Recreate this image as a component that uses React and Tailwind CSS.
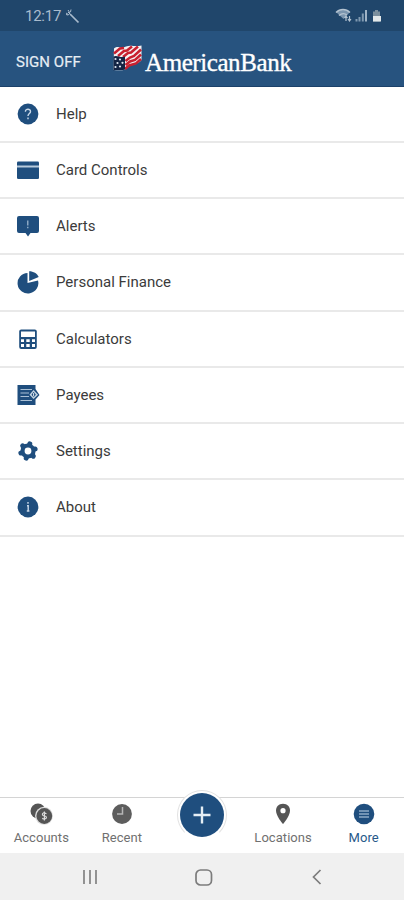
const NAVY = "#1f4e7e";

function FlagLogo() {
  return (
    <svg width="31" height="28" viewBox="0 0 31 28" className="shrink-0">
      <path d="M2 4.500C6 1 9 5 14 2.500C19 .5 22 3 29.500 1.500V16C26 21 22 18 17 22L13 25.500C9 27 5 26 1.500 26Z" fill="#f4f1f3" />
      <g stroke="#c8202f" strokeWidth="2.500" fill="none">
        <path d="M2 9.500L8 4.500L12 4" />
        <path d="M6 12L12 7L15 6.500L20 2.500" />
        <path d="M11 13L16 9L19 8.500L26 2.500" />
        <path d="M13.500 17L18 13.500L22 12L29 5.500" />
        <path d="M13.500 21L18 17.500L23 16L29 10.500" />
        <path d="M13 25L17 21.500L24 19.500L29 15" />
      </g>
      <path d="M1.500 12.500C5 10.500 9 14.500 13 12.500V25.500C9 27 5 25 1.500 26.500Z" fill="#142444" />
      <g fill="#dfe6f0">
        <circle cx="3.500" cy="15" r="1.100" /><circle cx="8" cy="15.500" r="1.100" />
        <circle cx="5.500" cy="19" r="1.100" /><circle cx="10.500" cy="18.800" r="1.100" />
        <circle cx="3.500" cy="23" r="1.100" /><circle cx="8" cy="22.500" r="1.100" />
      </g>
    </svg>
  );
}

const icons = {
  Help: (
    <>
      <circle cx="12" cy="12" r="10.400" fill={NAVY} />
      <path d="M9.400 9.700C9.400 6.300 14.700 6.500 14.500 9.700C14.400 11.500 12 11.700 12 14M12 15.600V17.200" stroke="#c9d8e8" strokeWidth="1.400" fill="none" />
    </>
  ),
  "Card Controls": (
    <>
      <rect x="1" y="3.500" width="22" height="17.500" rx="1.300" fill={NAVY} />
      <path d="M1 8.500H23" stroke="#b9cbdc" strokeWidth="2" />
    </>
  ),
  Alerts: (
    <>
      <path d="M3 2H21Q23 2 23 4V17Q23 19 21 19H14.500L12 22.500L9.500 19H3Q1 19 1 17V4Q1 2 3 2Z" fill={NAVY} />
      <path d="M11.800 6.500V11.500M11.800 12.800V14.200" stroke="#a5bdd4" strokeWidth="1.200" />
    </>
  ),
  "Personal Finance": (
    <>
      <path d="M11.500 3V13L22 10.500A10.400 10.200 0 1 1 11.500 3Z" fill={NAVY} />
      <path d="M13.200 1.300C17.500 1.300 21 3.500 22.700 7L13.200 11Z" fill={NAVY} />
    </>
  ),
  Calculators: (
    <>
      <rect x="3.200" y="2.500" width="17.600" height="19.500" rx="2" fill={NAVY} />
      <path d="M5 4.500H19V10H5Z" fill="#fff" />
      <path d="M5 12.300H8V15H5ZM10.300 12.300H13.700V15H10.300ZM16 12.300H19V15H16ZM5 17H8V20H5ZM10.300 17H13.700V20H10.300ZM16 17H19V20H16Z" fill="#fff" />
    </>
  ),
  Payees: (
    <>
      <path d="M1.500 2H19.500V6L23.500 12L19.500 16.500V22H1.500Z" fill={NAVY} />
      <path d="M4.500 6.500H16M4.500 10H13M4.500 13.500H13M4.500 17.500H16" stroke="#aac0d5" strokeWidth="1.200" />
      <path d="M17.500 7L22 11.800L17.500 16L13.500 11.800Z" fill="#c6d5e3" />
      <path d="M17.600 8.800L19.800 11.800L17.600 14.300L15.500 11.800Z" fill={NAVY} />
      <path d="M17.600 10V13.300" stroke="#dce6ef" />
    </>
  ),
  Settings: (
    <>
      <g stroke={NAVY} strokeWidth="5" strokeLinecap="round" transform="rotate(14 12 12)">
        <path d="M12 4.600V19.400M5.600 8.300L18.400 15.700M5.600 15.700L18.400 8.300" />
      </g>
      <circle cx="12" cy="12" r="5.500" stroke={NAVY} strokeWidth="4.200" fill="#fff" />
    </>
  ),
  About: (
    <>
      <circle cx="12" cy="12" r="10.400" fill={NAVY} />
      <path d="M12 7V8.700M11 10.700H12.200V16M10.800 16H13.400" stroke="#c9d8e8" strokeWidth="1.400" fill="none" />
    </>
  ),
};

function StatusBar() {
  return (
    <div className="flex h-[31px] items-center justify-between bg-[#20466b] pl-[25px] pr-[19px] text-[#a9bbcd]">
      <div className="flex items-center gap-[4px] pt-px">
        <span className="text-[15px] leading-none tracking-[-0.25px]">12:17</span>
        <svg width="15" height="15" viewBox="0 0 15 15" fill="none" stroke="currentColor">
          <path d="M5 5L13.500 13.500" strokeWidth="1.700" />
          <path d="M1 4L4 6M3 1L5 4M6 .5L5.500 3M1 5.500L3 6M3 3L6 6" strokeWidth="1" />
        </svg>
      </div>
      <div className="flex items-center">
        <svg width="50" height="15" viewBox="0 0 50 15">
          <path d="M1.500 4.500C5 .7 11 .7 14.500 4.500L8.500 11Z" fill="#7b95ae" />
          <path d="M1 4.500C5 .5 11 .5 15 4.500M4 7.500Q8 4 12 7" fill="none" stroke="#b4c3d1" strokeWidth="1.400" />
          <path d="M11 13V8M9.500 10L11 8L12.500 10M14.500 8V13M13 11L14.500 13L16 11" fill="none" stroke="#b4c3d1" strokeWidth="1.200" />
          <path d="M21.500 11V13.500M24.500 9V13.500M27.800 5.500V13.500" stroke="#7f99b1" strokeWidth="2" />
          <path d="M31 2V13.500" stroke="#9fb3c6" strokeWidth="2" />
          <path d="M40 2H43V3.500H45V13.500H38V3.500H40Z" fill="#7b8f9d" />
          <path d="M38 8H46V13.500H38Z" fill="#e2e8e9" />
        </svg>
      </div>
    </div>
  );
}

const tabs = [
  {
    label: "Accounts",
    icon: (
      <>
        <circle cx="9" cy="9" r="7.500" fill="#555" />
        <circle cx="15" cy="13.800" r="9" fill="#ddd" />
        <circle cx="15.300" cy="14" r="7.900" fill="#555" />
        <path d="M17.500 11.700Q13.300 9.900 13.400 12.500Q13.600 14 15.500 14Q18 14.400 17.200 16.200Q16 17.600 13.200 16.400M15.400 9.500V18.500" stroke="#ddd" strokeWidth="1.200" fill="none" />
      </>
    ),
  },
  {
    label: "Recent",
    icon: (
      <>
        <circle cx="12" cy="12" r="9.900" fill="#5d5d5d" />
        <path d="M12.500 5V12H7" stroke="#b7b7b7" strokeWidth="1.500" fill="none" />
      </>
    ),
  },
  null,
  {
    label: "Locations",
    icon: (
      <>
        <path d="M12 1.800C7.500 1.800 5 5 5 8.700C5 14 12 22 12 22S19 14 19 8.700C19 5 16.500 1.800 12 1.800Z" fill="#555" />
        <circle cx="12" cy="8.700" r="2.600" fill="#fff" />
      </>
    ),
  },
  {
    label: "More",
    icon: (
      <>
        <circle cx="12" cy="12" r="10.300" fill={NAVY} />
        <path d="M7 9H17M7 12H17M7 15H17" stroke="#8fabc6" strokeWidth="1.300" />
      </>
    ),
  },
];

function TabBar() {
  return (
    <nav className="grid h-[56px] grid-cols-5 border-t border-[#d4d4d4] bg-white pl-px">
      {tabs.map((tab) =>
        tab ? (
          <div key={tab.label} className={`flex flex-col items-center pt-[4px] ${tab.label === "More" ? "text-[#28598a]" : "text-[#707070]"}`}>
            <svg width="24" height="24" viewBox="0 0 24 24">{tab.icon}</svg>
            <span className="mt-[4px] whitespace-nowrap text-[13px] leading-4 tracking-[0.05px]">{tab.label}</span>
          </div>
        ) : (
          <div key="add" className="flex justify-center">
            <div className="-mt-[8px] flex h-[50px] w-[50px] shrink-0 items-center justify-center rounded-full border border-[#e2e2e2] border-b-transparent bg-white">
              <div className="flex h-[44px] w-[44px] items-center justify-center rounded-full bg-[#1f4e7e]">
                <svg width="20" height="20" viewBox="0 0 20 20">
                  <path d="M10 1.500V18.500M1.500 10H18.500" stroke="#e5eef5" strokeWidth="2.400" />
                </svg>
              </div>
            </div>
          </div>
        ),
      )}
    </nav>
  );
}

export default function App() {
  return (
    <div className="flex h-[900px] w-[404px] flex-col overflow-hidden bg-white font-['Roboto',sans-serif]">
      <StatusBar />
      <header className="flex h-[55.5px] items-center border-b border-[#1c416a] bg-[#27537f] pl-4 text-white">
        <span className="w-[96px] shrink-0 whitespace-nowrap pt-[8px] text-[15px] leading-none tracking-[0.05px] text-[#e6edf4] [-webkit-text-stroke:0.2px_#e6edf4]">SIGN OFF</span>
        <FlagLogo />
        <span className="ml-[2px] whitespace-nowrap pt-[9px] font-['Liberation_Serif',serif] text-[25px] leading-none tracking-[-0.42px] [-webkit-text-stroke:0.35px_white]">AmericanBank</span>
      </header>
      <main className="flex-1">
        {Object.entries(icons).map(([label, icon]) => (
          <div key={label} className="flex h-[56.25px] items-center border-b-2 border-[#e9e9e9] pl-4">
            <svg width="24" height="24" viewBox="0 0 24 24" className="mr-4 shrink-0">{icon}</svg>
            <span className="text-[15px] leading-5 text-[#3b3b3b]">{label}</span>
          </div>
        ))}
      </main>
      <TabBar />
      <div className="flex h-[47px] items-center bg-[#f0f0f0] pl-[82px] pt-px text-[#7c7c7c]">
        <svg width="16" height="16" viewBox="0 0 16 16" fill="none" stroke="currentColor" strokeWidth="1.600">
          <path d="M2 1V15M8 1V15M14 1V15" />
        </svg>
        <svg width="18" height="18" viewBox="0 0 18 18" className="ml-[97px]" fill="none" stroke="currentColor" strokeWidth="1.700">
          <rect x="1" y="2" width="15.500" height="15" rx="4.500" />
        </svg>
        <svg width="10" height="16" viewBox="0 0 10 16" className="ml-[99px]" fill="none" stroke="currentColor" strokeWidth="1.700">
          <path d="M8.500 1L1.500 8L8.500 15" />
        </svg>
      </div>
    </div>
  );
}
